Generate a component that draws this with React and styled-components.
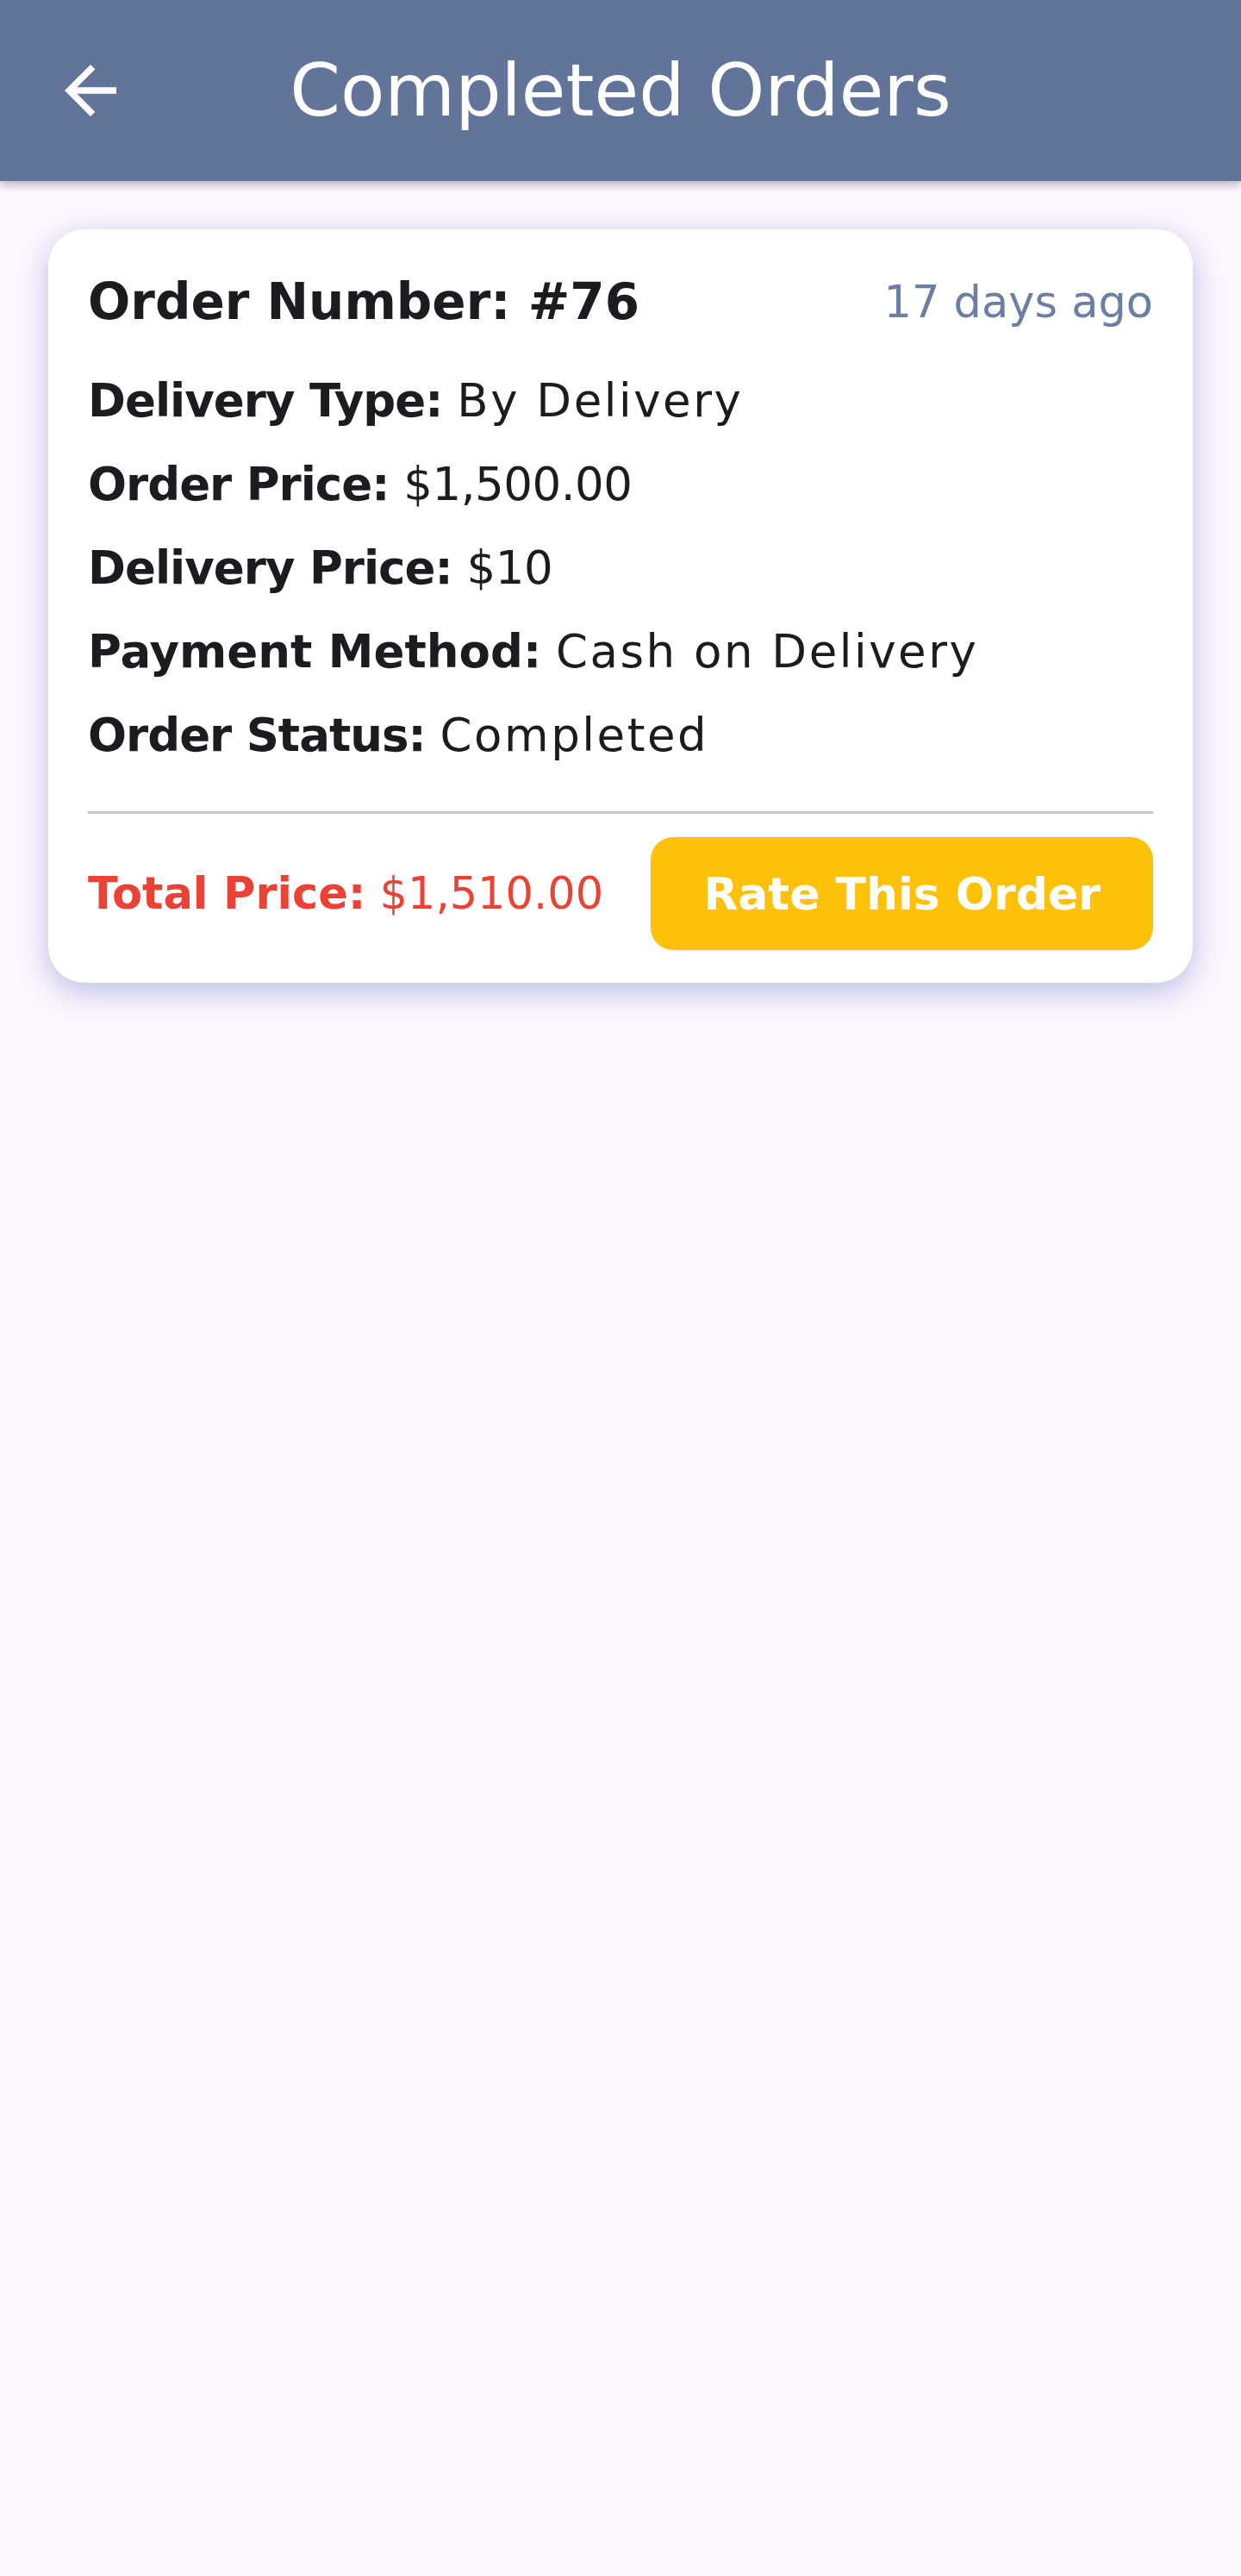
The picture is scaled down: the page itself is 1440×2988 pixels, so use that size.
import React from "react";
import styled, { createGlobalStyle } from "styled-components";

const GlobalStyle = createGlobalStyle`
  html, body {
    margin: 0;
    padding: 0;
    background: #fef7ff;
  }
  body {
    font-family: "DejaVu Sans", "Liberation Sans", sans-serif;
    color: #1d1b20;
  }
  * { box-sizing: border-box; }
`;

const Page = styled.div`
  min-height: 100vh;
  background: #fef7ff;
  display: flex;
  flex-direction: column;
`;

const AppBar = styled.header`
  position: relative;
  z-index: 2;
  height: 210px;
  background: #627499;
  display: grid;
  grid-template-columns: 210px 1fr 210px;
  align-items: center;
  box-shadow: 0 4px 10px rgba(40, 40, 60, 0.35);
`;

const BackButton = styled.button`
  width: 90px;
  height: 90px;
  margin-left: 60px;
  padding: 0;
  border: none;
  background: transparent;
  color: #ffffff;
  display: flex;
  align-items: center;
  justify-content: center;
  cursor: pointer;
  svg { width: 90px; height: 90px; display: block; }
`;

const Title = styled.h1`
  margin: 0;
  text-align: center;
  font-family: "DejaVu Sans", sans-serif;
  font-weight: 400;
  font-size: 84px;
  color: #ffffff;
`;

const Content = styled.main`
  padding: 56px 56px;
  display: flex;
  flex-direction: column;
`;

const Card = styled.article`
  background: #ffffff;
  border-radius: 42px;
  padding: 44px 46px 38px;
  box-shadow: 0 10px 36px rgba(100, 120, 190, 0.45);
  display: flex;
  flex-direction: column;
`;

const CardHeader = styled.div`
  height: 80px;
  display: flex;
  align-items: center;
  justify-content: space-between;
  margin-bottom: 26px;
`;

const OrderNumber = styled.h2`
  margin: 0;
  font-size: 58px;
  font-weight: 700;
  color: #1d1b20;
`;

const TimeAgo = styled.span`
  font-size: 51px;
  color: #6a7fa1;
`;

const InfoRow = styled.p`
  margin: 0;
  height: 97px;
  line-height: 97px;
  font-size: 53px;
  color: #1d1b20;
  white-space: nowrap;
`;

const Label = styled.b`
  font-weight: 700;
  letter-spacing: ${(p) => (p.$tight ? "-1px" : "0")};
`;

const Value = styled.span`
  letter-spacing: ${(p) => (p.$numeric ? "-0.5px" : "2.5px")};
`;

const Divider = styled.hr`
  margin: 40px 0 0;
  border: none;
  height: 3px;
  background: #c9c6cc;
`;

const Footer = styled.div`
  margin-top: 27px;
  display: flex;
  align-items: center;
  justify-content: space-between;
`;

const Total = styled.span`
  font-size: 51px;
  color: #ea4335;
  white-space: nowrap;
`;

const RateButton = styled.button`
  width: 583px;
  height: 131px;
  border: none;
  border-radius: 26px;
  background: #fdc10a;
  color: #ffffff;
  font-family: "DejaVu Sans", sans-serif;
  font-size: 52px;
  font-weight: 700;
  cursor: pointer;
`;

const ArrowBack = () => (
  <svg viewBox="0 0 24 24" fill="currentColor" aria-hidden="true">
    <path d="M20 11H7.83l5.59-5.59L12 4l-8 8 8 8 1.41-1.41L7.83 13H20v-2z" />
  </svg>
);

const details = [
  { label: "Delivery Type:", value: "By Delivery", tight: true },
  { label: "Order Price:", value: "$1,500.00", tight: true, numeric: true },
  { label: "Delivery Price:", value: "$10", tight: true, numeric: true },
  { label: "Payment Method:", value: "Cash on Delivery" },
  { label: "Order Status:", value: "Completed", tight: true },
];

export default function App() {
  return (
    <Page>
      <GlobalStyle />
      <AppBar>
        <BackButton aria-label="Back">
          <ArrowBack />
        </BackButton>
        <Title>Completed Orders</Title>
        <span />
      </AppBar>
      <Content>
        <Card>
          <CardHeader>
            <OrderNumber>Order Number: #76</OrderNumber>
            <TimeAgo>17 days ago</TimeAgo>
          </CardHeader>
          {details.map((d) => (
            <InfoRow key={d.label}>
              <Label $tight={d.tight}>{d.label}</Label>{" "}
              <Value $numeric={d.numeric}>{d.value}</Value>
            </InfoRow>
          ))}
          <Divider />
          <Footer>
            <Total>
              <Label>Total Price:</Label> $1,510.00
            </Total>
            <RateButton>Rate This Order</RateButton>
          </Footer>
        </Card>
      </Content>
    </Page>
  );
}
